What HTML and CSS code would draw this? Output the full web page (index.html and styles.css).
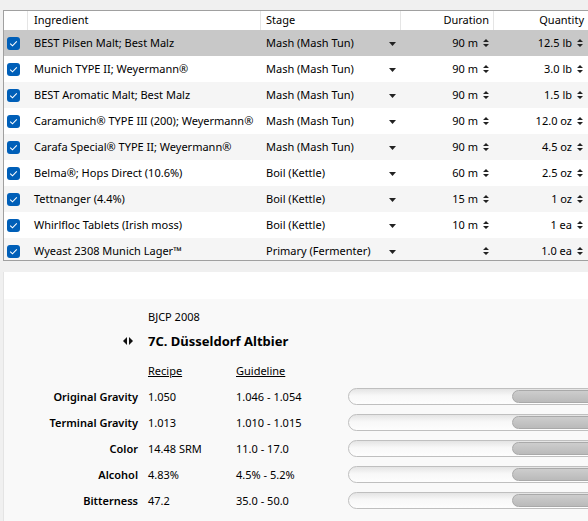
FILE: index.html
```html
<!DOCTYPE html>
<html>
<head>
<meta charset="utf-8">
<link rel="stylesheet" href="styles.css">
</head>
<body>
<div class="grid">
  <div class="row head">
    <div class="c-chk"></div>
    <div class="c-ing">Ingredient</div>
    <div class="c-stage"><span>Stage</span></div>
    <div class="c-dur"><span>Duration</span></div>
    <div class="c-qty"><span>Quantity</span></div>
  </div>
  <div class="row sel">
    <div class="c-chk"><span class="chk"><svg width="13" height="13" viewBox="0 0 13 13"><polyline points="3.2,6.6 5.5,8.8 9.8,4.4" /></svg></span></div>
    <div class="c-ing">BEST Pilsen Malt; Best Malz</div>
    <div class="c-stage"><span>Mash (Mash Tun)</span><svg class="dd" width="7" height="4" viewBox="0 0 7 4"><path d="M0 0H7L3.5 4Z"/></svg></div>
    <div class="c-dur"><span>90 m</span><svg class="spin" width="6" height="8" viewBox="0 0 6 8"><path d="M0 3L3 0L6 3ZM0 5H6L3 8Z"/></svg></div>
    <div class="c-qty"><span>12.5 lb</span><svg class="spin" width="6" height="8" viewBox="0 0 6 8"><path d="M0 3L3 0L6 3ZM0 5H6L3 8Z"/></svg></div>
  </div>
  <div class="row">
    <div class="c-chk"><span class="chk"><svg width="13" height="13" viewBox="0 0 13 13"><polyline points="3.2,6.6 5.5,8.8 9.8,4.4" /></svg></span></div>
    <div class="c-ing">Munich TYPE II; Weyermann®</div>
    <div class="c-stage"><span>Mash (Mash Tun)</span><svg class="dd" width="7" height="4" viewBox="0 0 7 4"><path d="M0 0H7L3.5 4Z"/></svg></div>
    <div class="c-dur"><span>90 m</span><svg class="spin" width="6" height="8" viewBox="0 0 6 8"><path d="M0 3L3 0L6 3ZM0 5H6L3 8Z"/></svg></div>
    <div class="c-qty"><span>3.0 lb</span><svg class="spin" width="6" height="8" viewBox="0 0 6 8"><path d="M0 3L3 0L6 3ZM0 5H6L3 8Z"/></svg></div>
  </div>
  <div class="row alt">
    <div class="c-chk"><span class="chk"><svg width="13" height="13" viewBox="0 0 13 13"><polyline points="3.2,6.6 5.5,8.8 9.8,4.4" /></svg></span></div>
    <div class="c-ing">BEST Aromatic Malt; Best Malz</div>
    <div class="c-stage"><span>Mash (Mash Tun)</span><svg class="dd" width="7" height="4" viewBox="0 0 7 4"><path d="M0 0H7L3.5 4Z"/></svg></div>
    <div class="c-dur"><span>90 m</span><svg class="spin" width="6" height="8" viewBox="0 0 6 8"><path d="M0 3L3 0L6 3ZM0 5H6L3 8Z"/></svg></div>
    <div class="c-qty"><span>1.5 lb</span><svg class="spin" width="6" height="8" viewBox="0 0 6 8"><path d="M0 3L3 0L6 3ZM0 5H6L3 8Z"/></svg></div>
  </div>
  <div class="row">
    <div class="c-chk"><span class="chk"><svg width="13" height="13" viewBox="0 0 13 13"><polyline points="3.2,6.6 5.5,8.8 9.8,4.4" /></svg></span></div>
    <div class="c-ing">Caramunich® TYPE III (200); Weyermann®</div>
    <div class="c-stage"><span>Mash (Mash Tun)</span><svg class="dd" width="7" height="4" viewBox="0 0 7 4"><path d="M0 0H7L3.5 4Z"/></svg></div>
    <div class="c-dur"><span>90 m</span><svg class="spin" width="6" height="8" viewBox="0 0 6 8"><path d="M0 3L3 0L6 3ZM0 5H6L3 8Z"/></svg></div>
    <div class="c-qty"><span>12.0 oz</span><svg class="spin" width="6" height="8" viewBox="0 0 6 8"><path d="M0 3L3 0L6 3ZM0 5H6L3 8Z"/></svg></div>
  </div>
  <div class="row alt">
    <div class="c-chk"><span class="chk"><svg width="13" height="13" viewBox="0 0 13 13"><polyline points="3.2,6.6 5.5,8.8 9.8,4.4" /></svg></span></div>
    <div class="c-ing">Carafa Special® TYPE II; Weyermann®</div>
    <div class="c-stage"><span>Mash (Mash Tun)</span><svg class="dd" width="7" height="4" viewBox="0 0 7 4"><path d="M0 0H7L3.5 4Z"/></svg></div>
    <div class="c-dur"><span>90 m</span><svg class="spin" width="6" height="8" viewBox="0 0 6 8"><path d="M0 3L3 0L6 3ZM0 5H6L3 8Z"/></svg></div>
    <div class="c-qty"><span>4.5 oz</span><svg class="spin" width="6" height="8" viewBox="0 0 6 8"><path d="M0 3L3 0L6 3ZM0 5H6L3 8Z"/></svg></div>
  </div>
  <div class="row">
    <div class="c-chk"><span class="chk"><svg width="13" height="13" viewBox="0 0 13 13"><polyline points="3.2,6.6 5.5,8.8 9.8,4.4" /></svg></span></div>
    <div class="c-ing">Belma®; Hops Direct (10.6%)</div>
    <div class="c-stage"><span>Boil (Kettle)</span><svg class="dd" width="7" height="4" viewBox="0 0 7 4"><path d="M0 0H7L3.5 4Z"/></svg></div>
    <div class="c-dur"><span>60 m</span><svg class="spin" width="6" height="8" viewBox="0 0 6 8"><path d="M0 3L3 0L6 3ZM0 5H6L3 8Z"/></svg></div>
    <div class="c-qty"><span>2.5 oz</span><svg class="spin" width="6" height="8" viewBox="0 0 6 8"><path d="M0 3L3 0L6 3ZM0 5H6L3 8Z"/></svg></div>
  </div>
  <div class="row alt">
    <div class="c-chk"><span class="chk"><svg width="13" height="13" viewBox="0 0 13 13"><polyline points="3.2,6.6 5.5,8.8 9.8,4.4" /></svg></span></div>
    <div class="c-ing">Tettnanger (4.4%)</div>
    <div class="c-stage"><span>Boil (Kettle)</span><svg class="dd" width="7" height="4" viewBox="0 0 7 4"><path d="M0 0H7L3.5 4Z"/></svg></div>
    <div class="c-dur"><span>15 m</span><svg class="spin" width="6" height="8" viewBox="0 0 6 8"><path d="M0 3L3 0L6 3ZM0 5H6L3 8Z"/></svg></div>
    <div class="c-qty"><span>1 oz</span><svg class="spin" width="6" height="8" viewBox="0 0 6 8"><path d="M0 3L3 0L6 3ZM0 5H6L3 8Z"/></svg></div>
  </div>
  <div class="row">
    <div class="c-chk"><span class="chk"><svg width="13" height="13" viewBox="0 0 13 13"><polyline points="3.2,6.6 5.5,8.8 9.8,4.4" /></svg></span></div>
    <div class="c-ing">Whirlfloc Tablets (Irish moss)</div>
    <div class="c-stage"><span>Boil (Kettle)</span><svg class="dd" width="7" height="4" viewBox="0 0 7 4"><path d="M0 0H7L3.5 4Z"/></svg></div>
    <div class="c-dur"><span>10 m</span><svg class="spin" width="6" height="8" viewBox="0 0 6 8"><path d="M0 3L3 0L6 3ZM0 5H6L3 8Z"/></svg></div>
    <div class="c-qty"><span>1 ea</span><svg class="spin" width="6" height="8" viewBox="0 0 6 8"><path d="M0 3L3 0L6 3ZM0 5H6L3 8Z"/></svg></div>
  </div>
  <div class="row alt">
    <div class="c-chk"><span class="chk"><svg width="13" height="13" viewBox="0 0 13 13"><polyline points="3.2,6.6 5.5,8.8 9.8,4.4" /></svg></span></div>
    <div class="c-ing">Wyeast 2308 Munich Lager™</div>
    <div class="c-stage"><span>Primary (Fermenter)</span><svg class="dd" width="7" height="4" viewBox="0 0 7 4"><path d="M0 0H7L3.5 4Z"/></svg></div>
    <div class="c-dur"><svg class="spin" width="6" height="8" viewBox="0 0 6 8"><path d="M0 3L3 0L6 3ZM0 5H6L3 8Z"/></svg></div>
    <div class="c-qty"><span>1.0 ea</span><svg class="spin" width="6" height="8" viewBox="0 0 6 8"><path d="M0 3L3 0L6 3ZM0 5H6L3 8Z"/></svg></div>
  </div>
</div>

<div class="panel">
  <div class="band"></div>
  <div class="body">
    <div class="bjcp">BJCP 2008</div>
    <div class="title">
      <div class="ico"><svg width="10" height="8" viewBox="0 0 10 8"><path d="M4 0V8L0 4Z M6 0V8L10 4Z"/></svg></div>
      <div class="name">7C. Düsseldorf Altbier</div>
    </div>
    <div class="stats">
      <div></div><div class="u">Recipe</div><div class="u">Guideline</div><div></div>

      <div class="lbl">Original Gravity</div><div>1.050</div><div>1.046 - 1.054</div>
      <div class="barcell"><div class="bar"><div class="fill"></div></div></div>

      <div class="lbl">Terminal Gravity</div><div>1.013</div><div>1.010 - 1.015</div>
      <div class="barcell"><div class="bar"><div class="fill"></div></div></div>

      <div class="lbl">Color</div><div>14.48 SRM</div><div>11.0 - 17.0</div>
      <div class="barcell"><div class="bar"><div class="fill"></div></div></div>

      <div class="lbl">Alcohol</div><div>4.83%</div><div>4.5% - 5.2%</div>
      <div class="barcell"><div class="bar"><div class="fill"></div></div></div>

      <div class="lbl">Bitterness</div><div>47.2</div><div>35.0 - 50.0</div>
      <div class="barcell"><div class="bar"><div class="fill"></div></div></div>
    </div>
  </div>
</div>
</body>
</html>
```

FILE: styles.css
```css
html, body {
  margin: 0;
  padding: 0;
}
body {
  width: 588px;
  height: 521px;
  overflow: hidden;
  background: #f0f0f0;
  font-family: "Noto Sans", sans-serif;
  font-size: 11px;
  color: #000;
}

.grid {
  margin: 10px 0 0 3px;
  width: 585px;
  height: 249px;
  overflow: hidden;
  border: 1px solid #a0a0a0;
  border-right: none;
  background: #fff;
}
.row {
  display: flex;
  height: 26px;
  align-items: center;
  background: #fff;
}
.row.alt { background: #f5f5f5; }
.row.sel { background: #c8c8c8; }
.row.head {
  height: 19px;
  background: #fff;
}
.row > div {
  height: 100%;
  display: flex;
  align-items: center;
  box-sizing: border-box;
  white-space: nowrap;
  overflow: hidden;
}
.row span:not(.chk) { margin-bottom: 2px; }
.head > div { border-right: 1px solid #e5e5e5; }
.head > .c-qty { border-right: none; }

.c-chk { width: 24px; padding-left: 3px; }
.c-ing { width: 233px; padding-left: 6px; padding-bottom: 2px; }
.c-stage { width: 140px; padding: 0 5px 0 5px; justify-content: space-between; }
.head .c-stage { justify-content: flex-start; }
.c-dur { width: 93px; padding-right: 5px; justify-content: flex-end; }
.c-qty { flex: 1; padding-right: 6px; justify-content: flex-end; }
.head .c-dur { padding-right: 4px; }
.head .c-qty { padding-right: 5px; }

.chk {
  width: 13px;
  height: 13px;
  border-radius: 3px;
  background: #005fb8;
  display: block;
}
.chk svg { display: block; }
.chk polyline {
  fill: none;
  stroke: #fff;
  stroke-width: 1.1;
}
.dd { margin-top: 2px; fill: #222; flex: none; }
.spin { margin-left: 5px; fill: #222; flex: none; }

.panel {
  margin: 11px 0 0 3px;
  width: 585px;
  border-left: 1px solid #e4e4e4;
  background: #f9f9f9;
  height: 260px;
  overflow: hidden;
}
.band {
  height: 27px;
  background: #fff;
}
.body { padding-top: 8px; }
.bjcp {
  height: 20px;
  line-height: 20px;
  padding-left: 144px;
}
.title {
  margin-top: 4px;
  height: 20px;
  display: flex;
  align-items: center;
}
.ico {
  width: 144px;
  box-sizing: border-box;
  padding-right: 15px;
  display: flex;
  justify-content: flex-end;
}
.ico svg { fill: #111; display: block; }
.name {
  font-weight: 700;
  font-size: 13px;
}
.stats {
  margin-top: 10px;
  display: grid;
  grid-template-columns: 144px 88px 112px 260px;
  grid-template-rows: 22px repeat(5, 26px);
  align-items: center;
}
.u {
  text-decoration: underline;
  align-self: start;
  line-height: 20px;
}
.lbl {
  text-align: right;
  padding-right: 10px;
  font-weight: 600;
}
.barcell { height: 26px; display: flex; align-items: center; }
.bar {
  width: 100%;
  height: 17px;
  box-sizing: border-box;
  border: 1px solid #bfbfbf;
  border-radius: 9px;
  background: linear-gradient(#e4e4e4, #f8f8f8 45%, #fdfdfd);
  padding: 1px 0 1px 163px;
}
.fill {
  height: 13px;
  box-sizing: border-box;
  border: 1px solid #a9a9a9;
  border-radius: 7px 0 0 7px;
  background: linear-gradient(#cdcdcd, #bababa);
}
```
